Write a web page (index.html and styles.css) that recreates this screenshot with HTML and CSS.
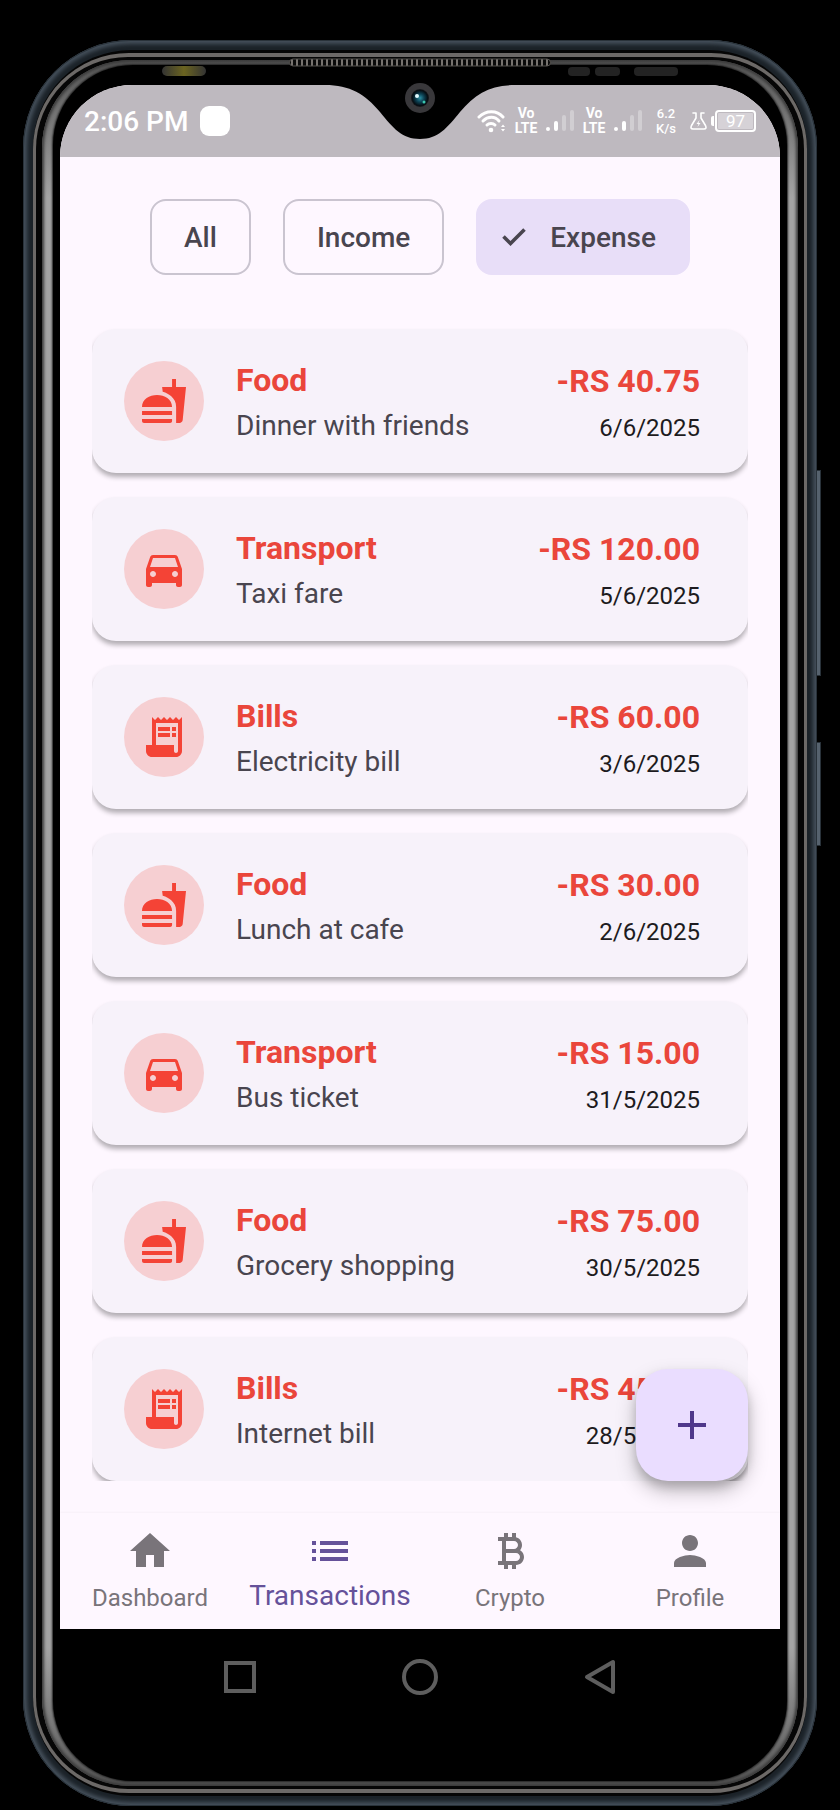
FILE: index.html
```html
<!DOCTYPE html>
<html lang="en">
<head>
<meta charset="utf-8">
<meta name="viewport" content="width=device-width, initial-scale=1">
<title>Transactions</title>
<link rel="stylesheet" href="styles.css">
</head>
<body>
<svg class="symbols" aria-hidden="true">
  <symbol id="i-food" viewBox="0 0 24 24"><path d="M18.06 22.99h1.66c.84 0 1.53-.64 1.63-1.46L23 5.05h-5V1h-1.97v4.05h-4.97l.3 2.34c1.71.47 3.31 1.32 4.27 2.26 1.44 1.42 2.43 2.89 2.43 5.29v8.05zM1 21.99V21h15.03v.99c0 .55-.45 1-1.01 1H2.01c-.56 0-1.01-.45-1.01-1zm15.03-7c0-8-15.03-8-15.03 0h15.03zM1.02 17h15v2h-15z"/></symbol>
  <symbol id="i-car" viewBox="0 0 24 24"><path d="M18.92 6.01C18.72 5.42 18.16 5 17.5 5h-11c-.66 0-1.21.42-1.42 1.01L3 12v8c0 .55.45 1 1 1h1c.55 0 1-.45 1-1v-1h12v1c0 .55.45 1 1 1h1c.55 0 1-.45 1-1v-8l-2.08-5.99zM6.5 16c-.83 0-1.5-.67-1.5-1.5S5.67 13 6.5 13s1.5.67 1.5 1.5S7.33 16 6.5 16zm11 0c-.83 0-1.5-.67-1.5-1.5s.67-1.5 1.5-1.5 1.5.67 1.5 1.5-.67 1.5-1.5 1.5zM5 11l1.500-4.500h11L19 11H5z"/></symbol>
  <symbol id="i-bill" viewBox="0 0 24 24"><path d="M19.5 3.500 18 2l-1.500 1.500L15 2l-1.500 1.500L12 2l-1.500 1.500L9 2 7.500 3.500 6 2v14H3v3c0 1.66 1.34 3 3 3h12c1.66 0 3-1.34 3-3V2l-1.500 1.500zM19 19c0 .55-.45 1-1 1s-1-.45-1-1v-3H8V5h11v14z"/><path d="M9 7h6v2H9zm7 0h2v2h-2zm-7 3h6v2H9zm7 0h2v2h-2z"/></symbol>
  <symbol id="i-bars" viewBox="0 0 28 22"><rect x="0" y="17" width="4" height="4" rx="2"/><rect x="8" y="11" width="4" height="10" rx="2"/><g opacity=".3"><rect x="16" y="5" width="4" height="16" rx="2"/><rect x="24" y="0" width="4" height="21" rx="2"/></g></symbol>
</svg>

<div class="phone">
  <span class="side-key side-key-volume"></span>
  <span class="side-key side-key-power"></span>
  <div class="rim-dark"><div class="rim-metal"><div class="rim-gap"><div class="rim-bright"><div class="glass">
    <div class="screen">
      <header class="status">
        <span class="clock">2:06 PM</span>
        <span class="notice"></span>
        <div class="status-icons">
          <svg class="wifi" viewBox="0 0 29 24" aria-hidden="true"><g fill="none" stroke="#fff" stroke-width="3" stroke-linecap="round"><path d="M2 8C9 1 20 1 26 8"/><path d="M6 12C11 7 18 7 22 12"/><path d="M10 16C12 14 16 14 18 16"/></g><circle cx="14" cy="21" r="2.300"/><path d="M24 18l2-2.500 2 2.500zM24 20l2 2.500 2-2.500z"/></svg>
          <span class="volte"><span>Vo</span><span>LTE</span></span>
          <svg class="bars"><use href="#i-bars"/></svg>
          <span class="volte"><span>Vo</span><span>LTE</span></span>
          <svg class="bars"><use href="#i-bars"/></svg>
          <span class="speed"><span>6.2</span><span>K/s</span></span>
          <svg class="flask" viewBox="0 0 17 18" aria-hidden="true"><path d="M3 1h3v5L1.500 13.500Q0 17 3 17h11q3 0 1.500-3.500L11 6V1h3" fill="none" stroke="#fff" stroke-width="1.600" stroke-linecap="round" stroke-linejoin="round"/><path d="M9.500 8l-3 4h2l-1 3 3-4h-2z"/></svg>
          <span class="battery"><span class="battery-level">97</span></span>
        </div>
      </header>

      <main class="content">
        <div class="chips">
          <button class="chip" type="button" aria-pressed="false">All</button>
          <button class="chip" type="button" aria-pressed="false">Income</button>
          <button class="chip chip-on" type="button" aria-pressed="true"><svg class="tick" viewBox="0 0 24 18" aria-hidden="true"><path d="M1.500 8.500l7 7L22.500 1.500" fill="none" stroke="#49454f" stroke-width="3.600"/></svg>Expense</button>
        </div>

        <ul class="list">
          <li class="card"><span class="badge"><svg><use href="#i-food"/></svg></span><div class="what"><h2>Food</h2><p>Dinner with friends</p></div><div class="amount"><strong>-RS 40.75</strong><time datetime="2025-06-06">6/6/2025</time></div></li>
          <li class="card"><span class="badge"><svg><use href="#i-car"/></svg></span><div class="what"><h2>Transport</h2><p>Taxi fare</p></div><div class="amount"><strong>-RS 120.00</strong><time datetime="2025-06-05">5/6/2025</time></div></li>
          <li class="card"><span class="badge"><svg><use href="#i-bill"/></svg></span><div class="what"><h2>Bills</h2><p>Electricity bill</p></div><div class="amount"><strong>-RS 60.00</strong><time datetime="2025-06-03">3/6/2025</time></div></li>
          <li class="card"><span class="badge"><svg><use href="#i-food"/></svg></span><div class="what"><h2>Food</h2><p>Lunch at cafe</p></div><div class="amount"><strong>-RS 30.00</strong><time datetime="2025-06-02">2/6/2025</time></div></li>
          <li class="card"><span class="badge"><svg><use href="#i-car"/></svg></span><div class="what"><h2>Transport</h2><p>Bus ticket</p></div><div class="amount"><strong>-RS 15.00</strong><time datetime="2025-05-31">31/5/2025</time></div></li>
          <li class="card"><span class="badge"><svg><use href="#i-food"/></svg></span><div class="what"><h2>Food</h2><p>Grocery shopping</p></div><div class="amount"><strong>-RS 75.00</strong><time datetime="2025-05-30">30/5/2025</time></div></li>
          <li class="card"><span class="badge"><svg><use href="#i-bill"/></svg></span><div class="what"><h2>Bills</h2><p>Internet bill</p></div><div class="amount"><strong>-RS 45.00</strong><time datetime="2025-05-28">28/5/2025</time></div></li>
        </ul>
        <button class="fab" type="button" aria-label="Add transaction"><svg viewBox="0 0 24 24"><path d="M19 13h-6v6h-2v-6H5v-2h6V5h2v6h6v2z"/></svg></button>
      </main>

      <nav class="tabs">
        <a class="tab" href="#dashboard"><svg viewBox="0 0 24 24"><path d="M10 20v-6h4v6h5v-8h3L12 3 2 12h3v8z"/></svg><span>Dashboard</span></a>
        <a class="tab tab-on" href="#transactions" aria-current="page"><svg viewBox="0 0 24 24"><path d="M3 13h2v-2H3v2zm0 4h2v-2H3v2zm0-8h2V7H3v2zm4 4h14v-2H7v2zm0 4h14v-2H7v2zM7 7v2h14V7H7z"/></svg><span>Transactions</span></a>
        <a class="tab" href="#crypto"><svg viewBox="0 0 24 24"><path d="M17.06 11.57c.59-.69.94-1.59.94-2.57 0-1.86-1.27-3.43-3-3.87V3h-2v2h-2V3H9v2H6v2h2v10H6v2h3v2h2v-2h2v2h2v-2c2.21 0 4-1.79 4-4 0-1.450-.78-2.730-1.940-3.430zM10 7h4c1.100 0 2 .9 2 2s-.9 2-2 2h-4V7zm5 10h-5v-4h5c1.100 0 2 .9 2 2s-.9 2-2 2z"/></svg><span>Crypto</span></a>
        <a class="tab" href="#profile"><svg viewBox="0 0 24 24"><path d="M12 12c2.210 0 4-1.790 4-4s-1.790-4-4-4-4 1.790-4 4 1.790 4 4 4zm0 2c-2.670 0-8 1.340-8 4v2h16v-2c0-2.660-5.330-4-8-4z"/></svg><span>Profile</span></a>
      </nav>
    </div>

    <div class="system-nav">
      <button type="button" aria-label="Recent apps"><svg viewBox="0 0 40 40"><rect x="6" y="6" width="28" height="28"/></svg></button>
      <button type="button" aria-label="Home"><svg viewBox="0 0 40 40"><circle cx="20" cy="20" r="16"/></svg></button>
      <button type="button" aria-label="Back"><svg viewBox="0 0 40 40"><path d="M33 5v30L7 20z" stroke-linejoin="round"/></svg></button>
    </div>
  </div></div></div></div></div>

  <svg class="hardware" viewBox="140 55 560 90" aria-hidden="true">
    <defs>
      <pattern id="mesh" width="5" height="8" patternUnits="userSpaceOnUse" x="290" y="59"><rect width="5" height="8" fill="#0a0a0a"/><rect x="1" width="2" height="8" fill="#77736f"/></pattern>
      <radialGradient id="lens"><stop offset="0" stop-color="#2b8fa3"/><stop offset=".5" stop-color="#0d4254"/><stop offset="1" stop-color="#03080d"/></radialGradient>
      <linearGradient id="flash"><stop offset="0" stop-color="#333"/><stop offset=".5" stop-color="#6b6420"/><stop offset="1" stop-color="#333"/></linearGradient>
    </defs>
    <path d="M325 84V85C350 85 365 94 380 112C393 128 402 139 420 139C438 139 447 128 460 112C475 94 490 85 515 85V84z"/>
    <rect x="289.500" y="59" width="261" height="7" rx="3.500" fill="url(#mesh)" stroke="#55524f"/>
    <rect x="162" y="66" width="44" height="10" rx="5" fill="url(#flash)"/>
    <g fill="#232323"><rect x="568" y="67" width="22" height="9" rx="4"/><rect x="595" y="67" width="25" height="9" rx="4"/><rect x="634" y="67" width="44" height="9" rx="4"/></g>
    <circle cx="420" cy="98" r="15" fill="#39383b"/><circle cx="420" cy="98" r="9" fill="#15171b"/><circle cx="420" cy="98" r="8" fill="url(#lens)"/><circle cx="417" cy="96" r="2" fill="#e3fbff"/><circle cx="424" cy="102" r="1.500" fill="#3cc8b0"/>
  </svg>
</div>
</body>
</html>
```

FILE: styles.css
```css
* {
  box-sizing: border-box;
}

body {
  margin: 0;
  padding: 40px 23px 5px;
  background: #000;
  font-family: Roboto, "Liberation Sans", sans-serif;
}

h2,
p,
ul {
  margin: 0;
  padding: 0;
}

button {
  font: inherit;
  cursor: pointer;
}

svg {
  display: block;
  fill: currentColor;
}

.symbols {
  position: absolute;
  width: 0;
  height: 0;
}

/* Phone body */
.phone {
  position: relative;
  padding: 10px;
  border-radius: 108px;
  background: #1b2228;
  box-shadow: inset 0 0 0 1px #29323a, inset 0 0 4px 4px #46515c;
}

.rim-dark {
  padding: 3px 0;
  border-radius: 98px;
  background: #050505;
}

.rim-metal {
  padding: 4px 3px;
  border-radius: 96px;
  background: #6c6967;
}

.rim-gap {
  padding: 3px 6px;
  border-radius: 92px;
  background: #060606;
}

.rim-bright {
  padding: 5px 11px;
  border-radius: 88px;
  background: linear-gradient(#555, #a4a4a4 8%, #a4a4a4 92%, #555);
  box-shadow: inset 0 0 3px 2px #3a3a3a;
}

.glass {
  padding: 20px 7px 0;
  border-radius: 80px;
  background: #000;
  box-shadow: 0 0 2px 1px #222;
}

.side-key {
  position: absolute;
  right: -4px;
  width: 5px;
  border: 1px solid #29323a;
  background: #56626e;
}

.side-key-volume {
  top: 430px;
  height: 206px;
}

.side-key-power {
  top: 702px;
  height: 104px;
}

.hardware {
  position: absolute;
  top: 15px;
  left: 50%;
  width: 560px;
  height: 90px;
  fill: #000;
  transform: translateX(-50%);
}

.screen {
  overflow: hidden;
  border-radius: 72px 72px 0 0;
  background: #fef7ff;
}

/* Status bar */
.status {
  display: flex;
  align-items: center;
  gap: 12px;
  height: 72px;
  padding: 0 24px;
  background: #beb9bf;
  color: #fff;
}

.clock {
  font-size: 28px;
  font-weight: 500;
}

.notice {
  width: 30px;
  height: 30px;
  border-radius: 9px;
  background: #fff;
}

.status-icons {
  display: flex;
  align-items: center;
  gap: 8px;
  margin-left: auto;
}

.wifi {
  width: 29px;
  height: 24px;
}

.volte {
  display: flex;
  flex-direction: column;
  align-items: center;
  width: 24px;
  font-size: 14px;
  font-weight: 700;
  line-height: 15px;
}

.bars {
  width: 28px;
  height: 22px;
}

.speed {
  display: flex;
  flex-direction: column;
  align-items: center;
  width: 32px;
  font-size: 13px;
  font-weight: 500;
  line-height: 15px;
}

.speed,
.volte {
  flex-shrink: 0;
}

.flask {
  width: 17px;
  height: 18px;
}

.battery {
  display: flex;
  align-items: center;
  margin-left: -4px;
}

.battery::before {
  width: 3px;
  height: 10px;
  margin-right: 1px;
  border-radius: 2px 0 0 2px;
  background: #fff;
  content: "";
}

.battery-level {
  width: 41px;
  height: 22px;
  padding: 1px;
  border: 2px solid #fff;
  border-radius: 4px;
  background: #d6d2d7 content-box;
  font-size: 17px;
  line-height: 16px;
  text-align: center;
}

/* Filters */
.content {
  position: relative;
  padding: 42px 32px 32px;
}

.chips {
  display: flex;
  justify-content: center;
  gap: 32px;
}

.chip {
  display: flex;
  align-items: center;
  gap: 24px;
  height: 76px;
  padding: 0 32px;
  border: 2px solid #cac4d0;
  border-radius: 16px;
  background: transparent;
  color: #49454f;
  font-size: 28px;
  font-weight: 500;
}

.chip-on {
  padding: 0 32px 0 24px;
  border-color: #e8def8;
  background: #e8def8;
}

.tick {
  width: 24px;
  height: 18px;
}

/* Transactions */
.list {
  display: flex;
  flex-direction: column;
  gap: 24px;
  margin-top: 48px;
  padding-top: 6px;
  overflow: hidden;
  list-style: none;
}

.card {
  display: flex;
  align-items: center;
  gap: 32px;
  height: 144px;
  padding: 0 48px 0 32px;
  border-radius: 24px;
  background: #f7f2fa;
  box-shadow: 0 4px 5px rgba(0, 0, 0, 0.3);
}

.badge {
  display: grid;
  flex-shrink: 0;
  place-items: center;
  width: 80px;
  height: 80px;
  border-radius: 50%;
  background: #f6cfd2;
  color: #f44336;
}

.badge svg,
.tab svg,
.fab svg {
  width: 48px;
  height: 48px;
}

.what {
  flex: 1;
}

.what h2,
.amount strong {
  color: #ea463b;
  font-size: 32px;
  font-weight: 700;
  line-height: 50px;
}

.what p {
  color: #49454f;
  font-size: 28px;
  line-height: 42px;
}

.amount {
  display: flex;
  flex-direction: column;
  align-items: flex-end;
}

.amount strong {
  line-height: 54px;
}

.amount time {
  color: #1d1b20;
  font-size: 24px;
  line-height: 40px;
}

.fab {
  position: absolute;
  right: 32px;
  bottom: 32px;
  display: grid;
  place-items: center;
  width: 112px;
  height: 112px;
  padding: 0;
  border: 0;
  border-radius: 32px;
  background: #eaddff;
  box-shadow: 0 10px 20px rgba(0, 0, 0, 0.25), 0 6px 10px rgba(0, 0, 0, 0.15);
  color: #4f378b;
}

/* Bottom tabs */
.tabs {
  display: grid;
  grid-template-columns: repeat(4, 1fr);
  height: 116px;
  padding-top: 14px;
  box-shadow: 0 -1px 2px rgba(0, 0, 0, 0.03);
}

.tab {
  display: flex;
  flex-direction: column;
  align-items: center;
  gap: 5px;
  color: #79747a;
  font-size: 24px;
  line-height: 36px;
  text-decoration: none;
}

.tab-on {
  color: #65519a;
  font-size: 28px;
  line-height: 32px;
}

/* Android buttons */
.system-nav {
  display: flex;
  justify-content: center;
  height: 152px;
  padding-top: 28px;
}

.system-nav button {
  width: 25%;
  height: 40px;
  padding: 0;
  border: 0;
  background: none;
}

.system-nav svg {
  width: 40px;
  height: 40px;
  margin: 0 auto;
  fill: none;
  stroke: #5e5e5e;
  stroke-width: 4;
}
```
